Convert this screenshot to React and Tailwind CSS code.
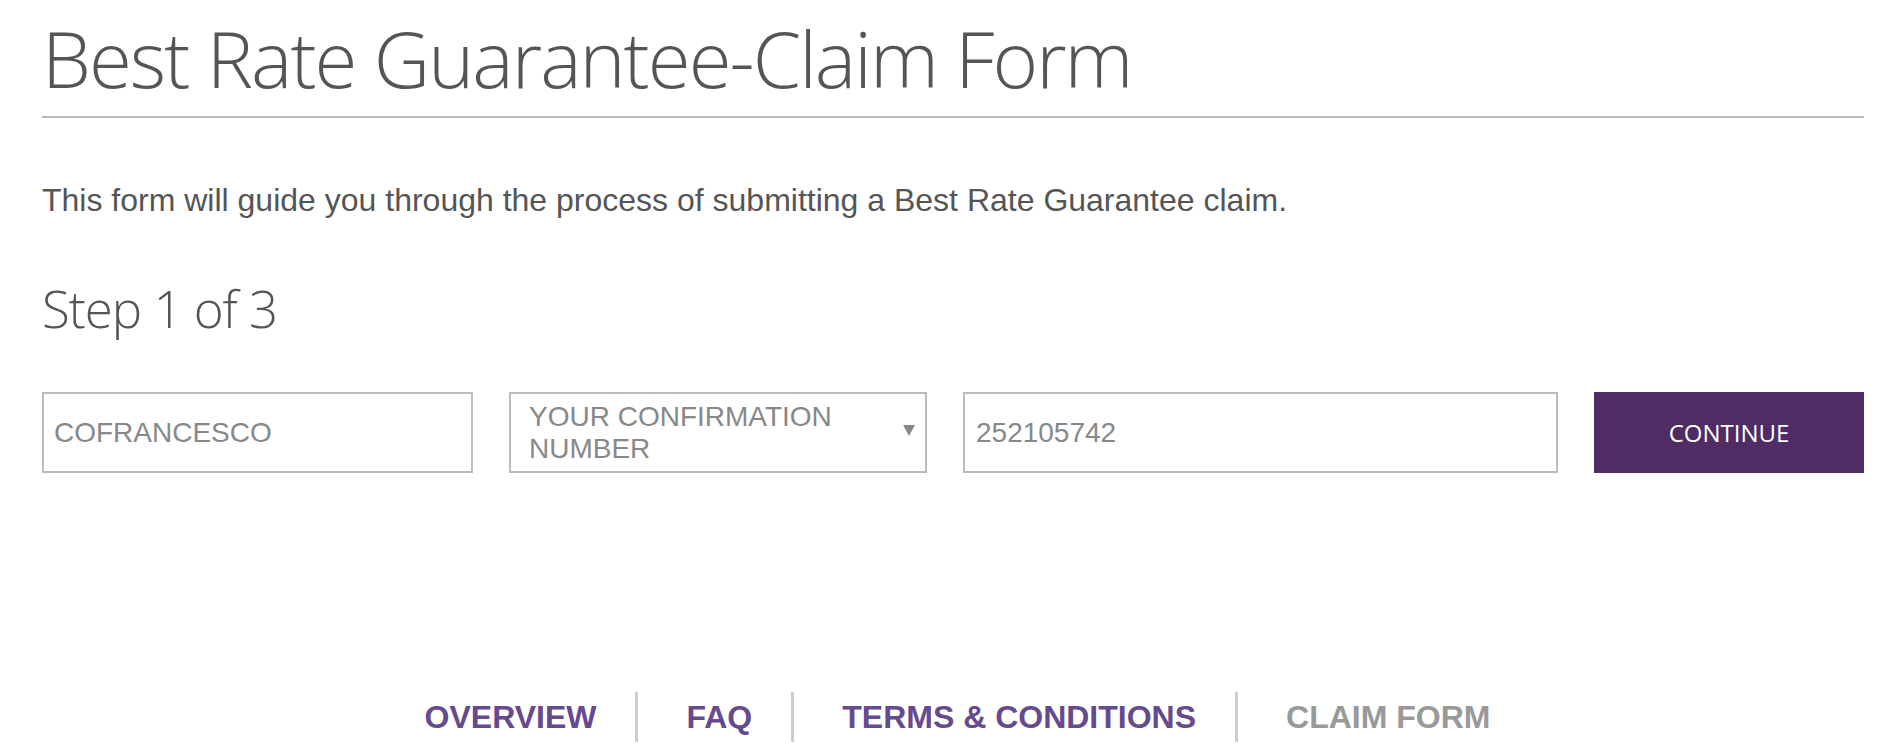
import { useState } from "react";

const navItems = [
  { label: "OVERVIEW", active: false },
  { label: "FAQ", active: false },
  { label: "TERMS & CONDITIONS", active: false },
  { label: "CLAIM FORM", active: true },
];

export default function App() {
  const [lastName, setLastName] = useState("COFRANCESCO");
  const [number, setNumber] = useState("252105742");

  return (
    <div className="min-h-screen bg-white pl-[42px] pr-[39px] pt-[19px] text-[#555]">
      <h1 className="border-b-2 border-[#bbb] pb-[19px] font-['Open_Sans',sans-serif] text-[78px] font-light leading-none tracking-[-0.025em]">
        Best Rate Guarantee-Claim Form
      </h1>

      <p className="mt-[64px] font-['Liberation_Sans',Arial,sans-serif] text-[32px] leading-[36px]">
        This form will guide you through the process of submitting a Best Rate Guarantee claim.
      </p>

      <h2 className="mt-[65px] font-['Open_Sans',sans-serif] text-[51px] font-light leading-none tracking-[-0.02em]">
        Step 1 of 3
      </h2>

      <form
        className="mt-[58px] flex h-[81px] gap-[36px] font-['Liberation_Sans',Arial,sans-serif] text-[28px] text-[#888]"
        onSubmit={(event) => event.preventDefault()}
      >
        <input
          type="text"
          className="w-[431px] border-2 border-[#bbb] px-[10px] text-[#888] outline-none"
          value={lastName}
          onChange={(event) => setLastName(event.target.value)}
        />
        <div className="flex w-[418px] items-center justify-between border-2 border-[#bbb] pl-[18px] pr-[10px]">
          <span className="leading-[32px]">
            YOUR CONFIRMATION
            <br />
            NUMBER
          </span>
          <svg width="12" height="11" viewBox="0 0 12 11" className="-mt-[4px]">
            <polygon points="0,0 12,0 6,11" fill="#888" />
          </svg>
        </div>
        <input
          type="text"
          className="w-[595px] border-2 border-[#bbb] px-[11px] text-[#888] outline-none"
          value={number}
          onChange={(event) => setNumber(event.target.value)}
        />
        <button
          type="submit"
          className="flex-1 bg-[#4f2c64] font-['Open_Sans',sans-serif] text-[24px] text-white"
        >
          CONTINUE
        </button>
      </form>

      <nav className="mt-[219px] flex items-center justify-center font-['Liberation_Sans',Arial,sans-serif] text-[32px] font-bold">
        {navItems.map((item, i) => (
          <div key={item.label} className="flex items-center">
            {i > 0 ? <span className="h-[50px] w-[3px] bg-[#ccc]" /> : null}
            <a
              href="#"
              className={
                "pl-[48px] pr-[39px] leading-[50px] " +
                (item.active ? "text-[#999]" : "text-[#664a8e]")
              }
            >
              {item.label}
            </a>
          </div>
        ))}
      </nav>
    </div>
  );
}
